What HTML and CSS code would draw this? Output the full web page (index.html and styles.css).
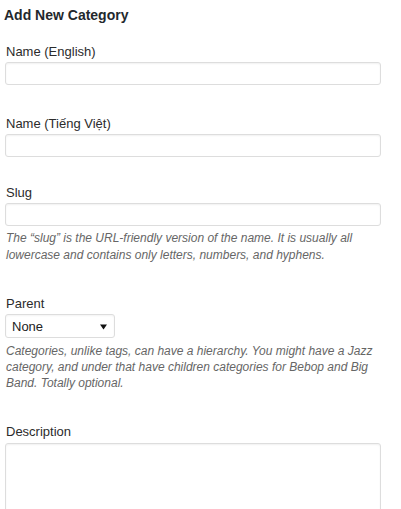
FILE: index.html
```html
<!DOCTYPE html>
<html lang="vi">
<head>
<meta charset="utf-8">
<title>Add New Category</title>
<link rel="stylesheet" href="styles.css">
</head>
<body>
<div class="form-wrap">
  <h3 class="title">Add New Category</h3>
  <div class="field field-first">
    <label class="label">Name (English)</label>
    <input class="input" type="text">
  </div>
  <div class="field field-second">
    <label class="label">Name (Tiếng Việt)</label>
    <input class="input" type="text">
  </div>
  <div class="field field-slug">
    <label class="label">Slug</label>
    <input class="input" type="text">
    <p class="help">The “slug” is the URL-friendly version of the name. It is usually all lowercase and contains only letters, numbers, and hyphens.</p>
  </div>
  <div class="field field-gap">
    <label class="label">Parent</label>
    <div class="select">
      <span class="select-value">None</span>
      <svg class="select-arrow" width="7" height="6" viewBox="0 0 7 6"><path d="M0 0.5 H7 L3.5 5.5 Z" fill="#111"/></svg>
    </div>
    <p class="help help-parent">Categories, unlike tags, can have a hierarchy. You might have a Jazz category, and under that have children categories for Bebop and Big Band. Totally optional.</p>
  </div>
  <div class="field field-gap">
    <label class="label">Description</label>
    <textarea class="textarea"></textarea>
  </div>
</div>
</body>
</html>
```
FILE: styles.css
```css
html, body {
  margin: 0;
  padding: 0;
  background: #fff;
}
body {
  font-family: "Liberation Sans", Arial, sans-serif;
  font-size: 13px;
  color: #333;
}
.form-wrap {
  padding: 6px 0 0 5px;
  width: 376px;
}
.title {
  margin: 0 0 0 -1px;
  font-size: 14px;
  line-height: 18px;
  font-weight: bold;
  color: #23282d;
}
.field {
  display: flex;
  flex-direction: column;
  align-items: flex-start;
}
.field-first { margin-top: 20px; }
.field-second { margin-top: 31px; }
.field-slug { margin-top: 28px; }
.field-gap { margin-top: 33px; }
.label {
  display: block;
  line-height: 16px;
  margin: 0 0 2px 1px;
  color: #2b2b2b;
}
.input {
  box-sizing: border-box;
  width: 376px;
  height: 23px;
  margin: 0;
  border: 1px solid #ddd;
  border-radius: 3px;
  box-shadow: inset 0 1px 2px rgba(0,0,0,0.06);
  background: #fff;
  font: inherit;
  padding: 2px 5px;
}
.help {
  margin: 4px 0 0 1px;
  font-size: 12px;
  font-style: italic;
  line-height: 16.5px;
  color: #666;
}
.help-parent {
  margin-top: 5px;
  line-height: 16px;
}
.select {
  box-sizing: border-box;
  width: 110px;
  height: 24px;
  border: 1px solid #ddd;
  border-radius: 3px;
  box-shadow: inset 0 1px 2px rgba(0,0,0,0.05);
  display: flex;
  align-items: center;
  justify-content: space-between;
  padding: 0 7px 0 6px;
  color: #222;
  font-size: 13px;
}
.select-arrow {
  display: block;
  margin-top: 1px;
}
.textarea {
  box-sizing: border-box;
  display: block;
  width: 376px;
  height: 90px;
  margin: 1px 0 0 0;
  border: 1px solid #ddd;
  border-radius: 3px;
  box-shadow: inset 0 1px 2px rgba(0,0,0,0.06);
  resize: none;
  font: inherit;
}
```
